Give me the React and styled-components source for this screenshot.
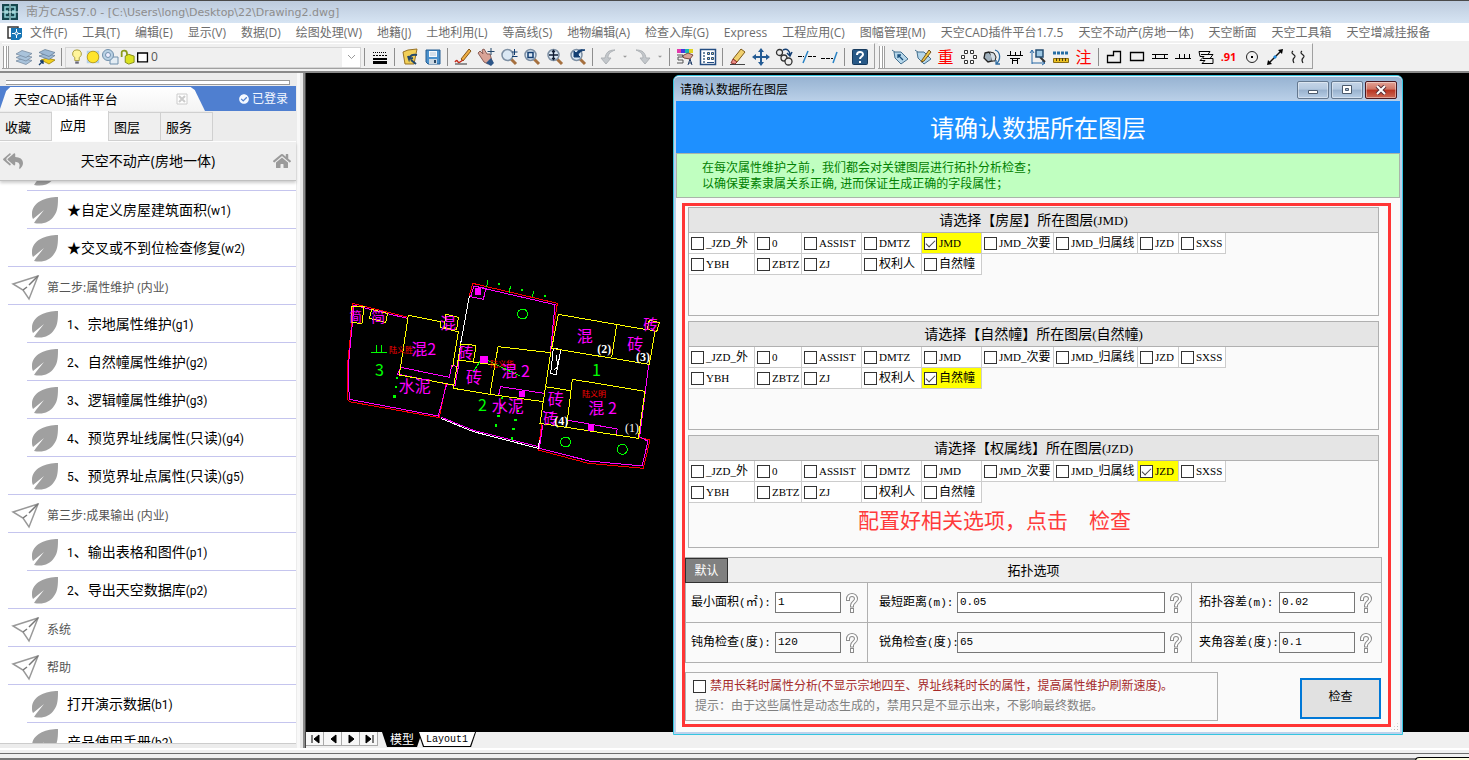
import React, { useState } from "react";
import styled, { createGlobalStyle, css } from "styled-components";
import { FaCheckCircle, FaHome, FaReplyAll } from "react-icons/fa";

const GlobalStyle = createGlobalStyle`
    *, *::before, *::after {
        box-sizing: border-box;
    }

    body {
        margin: 0;
        overflow: hidden;
        background: #f0f0f0;
        font-family: "Open Sans", "Noto Sans CJK SC", sans-serif;
        font-size: 12px;
        line-height: 16px;
        color: #000;
    }

    button, input, select {
        font: inherit;
        color: inherit;
        margin: 0;
    }
`;

// --- Main window ---
const Window = styled.div`
    display: flex;
    flex-direction: column;
    height: 100vh;
    white-space: nowrap;
`;

const TitleBar = styled.header`
    display: flex;
    align-items: center;
    gap: 8px;
    height: 23px;
    flex-shrink: 0;
    padding-left: 2px;
    border-top: 1px solid #4a4a4a;
    background: linear-gradient(#bdcbdd, #d6e4f3);
    color: #8d8d8d;
`;

const TitleLatin = styled.span`
    font-family: "DejaVu Sans", sans-serif;
    font-size: 11px;
`;

const MenuBar = styled.nav`
    display: flex;
    align-items: center;
    gap: 15px;
    height: 18px;
    flex-shrink: 0;
    padding: 2px 0 0 7px;
    background: #fff;
`;

const MenuButton = styled.button`
    padding: 0;
    border: 0;
    background: none;
    color: #6d6d6d;
`;

const MenuIcon = styled.span`
    display: flex;
    margin-right: -8px;
`;

const Toolbars = styled.div`
    display: flex;
    gap: 3px;
    height: 32px;
    flex-shrink: 0;
    padding: 2px 0 2px 2px;
    background: #f0f0f0;
    border-bottom: 2px solid #8a8a8a;
`;

const Toolbar = styled.div`
    display: flex;
    align-items: center;
    padding: 2px 3px 0 1px;
    border-top: 1px solid #fff;
    border-right: 1px solid #a0a0a0;
    border-bottom: 1px solid #a0a0a0;
`;

const Grip = styled.span`
    width: 6px;
    height: 22px;
    margin-right: 3px;
    border: solid #a0a0a0;
    border-width: 0 1px;
    background: linear-gradient(90deg, #fff 2px, #a0a0a0 2px, #a0a0a0 3px, #fff 3px);
`;

const ToolButton = styled.button`
    display: flex;
    align-items: center;
    justify-content: center;
    width: ${({ $narrow }) => ($narrow ? "12px" : "23px")};
    height: 23px;
    padding: 0;
    border: 0;
    background: none;
    color: #f00;
    font-size: ${({ $small }) => ($small ? "11px" : "16px")};
    font-weight: ${({ $small }) => ($small ? 700 : 400)};
`;

const Separator = styled.span`
    width: 1px;
    height: 18px;
    margin: 0 3px;
    background: #8e8e8e;
`;

const LayerBox = styled.div`
    display: flex;
    align-items: center;
    width: 296px;
    height: 21px;
    padding-left: 3px;
    border: 1px solid #d5d5d5;
    background: #f0f0f0;

    select {
        flex: 1;
        height: 19px;
        padding: 0;
        border: 0;
        appearance: none;
        background: none;
        color: #555;
    }
`;

const LayerArrow = styled.span`
    display: flex;
    align-items: center;
    justify-content: center;
    width: 18px;
    height: 19px;
    background: #fff;
`;

const Workspace = styled.div`
    display: flex;
    flex: 1;
    min-height: 0;
`;

// --- Plugin palette on the left ---
const Sidebar = styled.aside`
    display: flex;
    flex-direction: column;
    width: 306px;
    flex-shrink: 0;
    padding: 7px 9px 4px 0;
    background: #ececec;
    border-right: 1px solid #444;
    box-shadow: inset -2px 0 #8a8a8a, inset -5px 0 #e8e8e8, inset -8px 0 #f8f8f8;
`;

const SidebarGrip = styled.div`
    height: 5px;
    margin: 0 6px 1px;
    flex-shrink: 0;
    border: solid #999;
    border-width: 1px 1px 1px 0;
    background: #fff;
`;

const PluginBar = styled.div`
    display: flex;
    justify-content: space-between;
    height: 25px;
    flex-shrink: 0;
    background: #4f7fd0;
`;

const PluginTab = styled.div`
    display: flex;
    align-items: center;
    justify-content: space-between;
    width: 205px;
    padding: 0 17px 0 14px;
    background: linear-gradient(#fff, #f4f4f4);
    clip-path: polygon(0 92%, 3% 20%, 5% 4%, 93% 4%, 95% 16%, 100% 100%, 0 100%);
    font-size: 13px;

    button {
        display: flex;
        padding: 0;
        border: 0;
        background: none;
    }
`;

const LoginState = styled.span`
    display: flex;
    align-items: center;
    gap: 3px;
    padding-right: 8px;
    color: #f4f8ff;
`;

const CategoryTabs = styled.div`
    display: flex;
    height: 31px;
    flex-shrink: 0;
    align-items: flex-end;
    border-bottom: 1px solid #fff;
`;

const CategoryTab = styled.button`
    width: 52px;
    height: 29px;
    padding: 0 0 0 5px;
    border: 1px solid #d0d0d0;
    border-left: 0;
    background: #efefef;
    text-align: left;
    font-size: 13px;

    ${({ $active }) =>
        $active &&
        css`
            width: 57px;
            height: 31px;
            padding: 0 0 2px 8px;
            border-bottom: 0;
            background: #fff;
        `}
`;

const PageHeader = styled.div`
    display: flex;
    align-items: center;
    justify-content: space-between;
    height: 39px;
    flex-shrink: 0;
    padding: 0 5px 0 3px;
    background: #efefef;
    border-bottom: 1px solid #c0c0c0;
    box-shadow: 0 2px 3px rgba(0, 0, 0, 0.2);
    z-index: 1;
    color: #9b9b9b;

    h2 {
        margin: 0;
        color: #000;
        font-size: 14px;
        font-weight: 400;
    }

    button {
        display: flex;
        padding: 0;
        border: 0;
        background: none;
        color: inherit;
    }
`;

const CommandList = styled.div`
    flex: 1;
    min-height: 0;
    overflow: hidden;
    background: #fff;
    border-bottom: 1px solid #ccc;
`;

// A lista começa rolada: só o fim do primeiro item aparece
const CommandScroll = styled.div`
    margin-top: -28px;
`;

const Command = styled.button`
    display: flex;
    align-items: center;
    gap: ${({ $group }) => ($group ? "6px" : "8px")};
    width: calc(100% - 8px);
    height: 38px;
    margin-left: 8px;
    padding: ${({ $group }) => ($group ? "4px 0 0 3px" : "0 0 0 23px")};
    border: 0;
    background: linear-gradient(#c5c5ee, #c5c5ee) ${({ $inset }) => ($inset ? "19px" : "0")} 100% / 100% 1px no-repeat;
    font-size: ${({ $group }) => ($group ? "12px" : "14px")};
    color: ${({ $group }) => ($group ? "#555" : "#000")};
`;

const SansLatin = styled.span`
    font-family: Roboto, sans-serif;
    font-size: 12px;
`;

// --- Drawing area ---
const Editor = styled.main`
    position: relative;
    display: flex;
    flex: 1;
    flex-direction: column;
    min-width: 0;
`;

const Canvas = styled.div`
    flex: 1;
    min-height: 0;
    padding: 197px 0 0 34px;
    background: #000;
    overflow: hidden;
`;

const LayoutStrip = styled.div`
    display: flex;
    height: 16px;
    flex-shrink: 0;
    background: #f0f0f0;
`;

const NavButton = styled.button`
    display: flex;
    align-items: center;
    justify-content: center;
    width: 18px;
    height: 14px;
    padding: 0;
    border: 1px solid #aaa;
    border-width: 0 1px 1px 0;
    background: #f7f7f7;
`;

const LayoutTab = styled.button`
    position: relative;
    z-index: 0;
    height: 15px;
    padding: 0 8px;
    border: 0;
    margin-left: ${({ $active }) => ($active ? "4px" : "-4px")};
    background: #000;
    color: ${({ $active }) => ($active ? "#fff" : "#000")};
    clip-path: polygon(0 0, 100% 0, calc(100% - 5px) 100%, 5px 100%);
    font-family: ${({ $active }) => ($active ? "inherit" : '"Liberation Mono", monospace')};
    font-size: ${({ $active }) => ($active ? "12px" : "10px")};
    line-height: 13px;

    &::before {
        content: "";
        position: absolute;
        inset: 0 1px 1px;
        z-index: -1;
        background: ${({ $active }) => ($active ? "#000" : "#fff")};
        clip-path: polygon(0 0, 100% 0, calc(100% - 5px) 100%, 5px 100%);
    }
`;

const StatusBar = styled.footer`
    display: flex;
    justify-content: flex-end;
    height: 12px;
    flex-shrink: 0;
    border-top: 2px solid #fff;
    background: linear-gradient(#f0f0f0 3px, #6d6d6d 3px, #6d6d6d 4px, #f0f0f0 4px, #f0f0f0 8px, #777 8px);
`;

const Balloon = styled.div`
    width: 54px;
    height: 4px;
    margin-top: 7px;
    border: 1px solid #000;
    border-bottom: 0;
    border-right: 0;
    border-radius: 8px 0 0 0;
    background: #ffffe1;
`;

// --- Layer dialog ---
const Dialog = styled.section`
    position: absolute;
    top: 2px;
    left: 367px;
    right: 66px;
    display: flex;
    flex-direction: column;
    padding: 0 2px 2px;
    border: 1px solid #35c5e0;
    border-radius: 6px 6px 0 0;
    background: #bcd2ec;
`;

const DialogTitle = styled.div`
    display: flex;
    align-items: center;
    gap: 2px;
    height: 25px;
    margin: 0 -2px;
    padding: 1px 5px 0 6px;
    border-top: 1px solid #e6f4fc;
    border-radius: 5px 5px 0 0;
    background: linear-gradient(#97b3d2, #bad0e8);
    font-size: 12px;

    span {
        flex: 1;
    }
`;

const CaptionButton = styled.button`
    display: flex;
    align-items: center;
    justify-content: center;
    width: 32px;
    height: 18px;
    padding: 0;
    border: 1px solid ${({ $close }) => ($close ? "#4a1820" : "#64788f")};
    border-radius: 2px;
    background: ${({ $close }) =>
        $close
            ? "linear-gradient(#e3a396, #cf7463 45%, #b93320 50%, #cc6a56)"
            : "linear-gradient(#c5d5e7, #b4c8df 45%, #98b1cd 50%, #b8cee6)"};
    box-shadow: inset 0 0 0 1px rgba(255, 255, 255, 0.4);
`;

const Banner = styled.h1`
    margin: 0;
    height: 52px;
    padding-top: 2px;
    background: #1e90ff;
    color: #fff;
    font-size: 24px;
    font-weight: 400;
    line-height: 50px;
    text-align: center;
`;

const Notice = styled.p`
    margin: 0;
    padding: 6px 25px 5px;
    border: 1px solid #a9b5a9;
    background: #c0ffc0;
    color: #008000;
`;

const DialogBody = styled.div`
    position: relative;
    padding: 5px 9px 5px 6px;
    background: #fafafa;
`;

const Highlight = styled.div`
    border: 3px solid #ff3535;
    padding: 1px 6px 3px 0;
`;

const LayerPanel = styled.fieldset`
    min-width: 0;
    min-height: ${({ $tall }) => ($tall ? "113px" : "109px")};
    margin: 0 3px 5px;
    padding: 0;
    border: 1px solid #b0b0b0;
`;

const PanelTitle = styled.h3`
    margin: 0;
    height: 25px;
    border-bottom: 1px solid #b0b0b0;
    background: #e5e5e5;
    font-size: 14px;
    font-weight: 400;
    line-height: 24px;
    text-align: center;
`;

const LayerGrid = styled.div`
    display: grid;
    grid-template-columns: 66px 47px 60px 60px 60px 72px 84px 41px 47px;
`;

const LayerCell = styled.label`
    display: flex;
    align-items: center;
    gap: 2px;
    height: 21px;
    padding-left: 2px;
    border: solid #ccc;
    border-width: 0 1px 1px 0;
    background: ${({ $checked }) => ($checked ? "#ff0" : "#fff")};
`;

const CheckBox = styled.input`
    position: relative;
    width: 13px;
    height: 13px;
    flex-shrink: 0;
    appearance: none;
    border: 1px solid #333;
    background: #fff;

    &:checked::after {
        content: "";
        position: absolute;
        top: 2px;
        left: 1px;
        width: 9px;
        height: 5px;
        border: solid #444;
        border-width: 0 0 1px 1px;
        transform: rotate(-45deg);
    }
`;

const SerifLatin = styled.span`
    font-family: "Liberation Serif", serif;
    font-size: ${({ $large }) => ($large ? "13px" : "11px")};
`;

const MonoLatin = styled.span`
    font-family: "Liberation Mono", monospace;
    font-size: 11px;
`;

const RedNote = styled.p`
    margin: 5px 0 0 169px;
    color: #ff3a3a;
    font-size: 21px;
    line-height: 24px;
`;

const Topology = styled.div`
    margin-top: 9px;
    border: 1px solid #b0b0b0;
`;

const TopologyHead = styled.div`
    position: relative;
    height: 25px;
    border-bottom: 1px solid #b0b0b0;
    background: #efefef;
    font-size: 13px;
    line-height: 24px;
    text-align: center;
`;

const DefaultButton = styled.button`
    position: absolute;
    top: 0;
    left: -1px;
    width: 43px;
    height: 25px;
    padding: 0 0 2px;
    border: 1px solid #303030;
    background: #808080;
    color: #fff;
    font-size: 12px;
`;

const TopologyGrid = styled.div`
    display: grid;
    grid-template-columns: 182px 1fr 189px;
`;

const Field = styled.div`
    display: flex;
    align-items: center;
    height: ${({ $last }) => ($last ? "39px" : "40px")};
    padding: 0 4px 0 ${({ $column }) => ["5px", "11px", "7px"][$column]};
    border: solid #b0b0b0;
    border-width: ${({ $last }) => ($last ? "0" : "0 0 1px")};
    border-right-width: ${({ $column }) => ($column === 2 ? "0" : "1px")};

    label {
        width: ${({ $column }) => ["84px", "78px", "80px"][$column]};
    }

    input {
        flex: 1;
        min-width: 0;
        height: 21px;
        padding: 0 2px 2px;
        border: 1px solid #777;
        background: ${({ $last }) => ($last ? "#fafafa" : "#fff")};
        font-family: "Liberation Mono", monospace;
        font-size: 11px;
    }
`;

const HelpButton = styled.button`
    display: flex;
    justify-content: center;
    width: 22px;
    padding: 0;
    border: 0;
    background: none;
`;

const DialogFooter = styled.div`
    display: flex;
    align-items: center;
    justify-content: space-between;
    margin-top: 9px;
`;

const OptionBox = styled.div`
    width: 533px;
    height: 49px;
    padding: 3px 7px;
    border: 1px solid #b0b0b0;
    line-height: 20px;

    label {
        display: flex;
        align-items: center;
        gap: 4px;
        color: #a52a2a;
    }

    p {
        margin: 0 0 0 2px;
        color: #808080;
    }
`;

const CheckButton = styled.button`
    width: 81px;
    height: 41px;
    margin: 4px 1px 0 0;
    padding: 0 0 3px;
    border: 2px solid #0078d7;
    background: #e1e1e1;
`;

const ResizeGrip = styled.span`
    position: absolute;
    right: 1px;
    bottom: 1px;
    width: 9px;
    height: 9px;
    background: radial-gradient(circle, #b8b8b8 1px, transparent 1px) 0 0 / 3px 3px;
    clip-path: polygon(100% 0, 100% 100%, 0 100%);
`;

// --- Data ---
const menus = [
    "文件(F)",
    "工具(T)",
    "编辑(E)",
    "显示(V)",
    "数据(D)",
    "绘图处理(W)",
    "地籍(J)",
    "土地利用(L)",
    "等高线(S)",
    "地物编辑(A)",
    "检查入库(G)",
    "Express",
    "工程应用(C)",
    "图幅管理(M)",
    "天空CAD插件平台1.7.5",
    "天空不动产(房地一体)",
    "天空断面",
    "天空工具箱",
    "天空增减挂报备",
];

const commands = [
    { text: "" },
    { text: "★自定义房屋建筑面积(w1)" },
    { text: "★交叉或不到位检查修复(w2)" },
    { text: "第二步:属性维护 (内业)", group: true },
    { text: "1、宗地属性维护(g1)" },
    { text: "2、自然幢属性维护(g2)" },
    { text: "3、逻辑幢属性维护(g3)" },
    { text: "4、预览界址线属性(只读)(g4)" },
    { text: "5、预览界址点属性(只读)(g5)" },
    { text: "第三步:成果输出 (内业)", group: true },
    { text: "1、输出表格和图件(p1)" },
    { text: "2、导出天空数据库(p2)" },
    { text: "系统", group: true },
    { text: "帮助", group: true },
    { text: "打开演示数据(b1)" },
    { text: "产品使用手册(b2)" },
];

const layers = [
    "_JZD_外",
    "0",
    "ASSIST",
    "DMTZ",
    "JMD",
    "JMD_次要",
    "JMD_归属线",
    "JZD",
    "SXSS",
    "YBH",
    "ZBTZ",
    "ZJ",
    "权利人",
    "自然幢",
];

const panels = [
    { title: "请选择【房屋】所在图层(JMD)", selected: "JMD" },
    { title: "请选择【自然幢】所在图层(自然幢)", selected: "自然幢" },
    { title: "请选择【权属线】所在图层(JZD)", selected: "JZD", note: "配置好相关选项，点击　检查" },
];

const fields = [
    { id: "minArea", label: "最小面积(㎡):", value: "1" },
    { id: "minDistance", label: "最短距离(m):", value: "0.05" },
    { id: "tolerance", label: "拓扑容差(m):", value: "0.02" },
    { id: "obtuse", label: "钝角检查(度):", value: "120" },
    { id: "acute", label: "锐角检查(度):", value: "65" },
    { id: "angleTolerance", label: "夹角容差(度):", value: "0.1" },
];

// --- Icons ---
const Lens = ({ children }) => (
    <>
        <path d="M11 11l5 5" stroke="#a5703f" strokeWidth="3" />
        <circle cx="7.5" cy="7" r="5.5" fill="#dbe8f4" stroke="#7d8fa3" strokeWidth="1.5" />
        {children}
    </>
);

const Tag = () => (
    <>
        <path d="M1 2l4 3" stroke="#44708f" />
        <path d="M3 4l7 0 7 7-7 5-6-6z" fill="#b5d6ea" stroke="#44708f" />
    </>
);

const icons = {
    layers: (
        <g fill="#a9c3db" stroke="#70849a" strokeWidth=".7">
            <path d="M1 13l6-2.500 10 2-6 4z" />
            <path d="M1 9.500l6-2.500 10 2-6 4z" />
            <path d="M1 6l6-3.500 10 3-6 4z" />
        </g>
    ),
    layersPrev: (
        <>
            <path d="M3 12l6-2 8 2-6 4z" fill="#f2cf1c" stroke="#8f7500" strokeWidth=".7" />
            <g fill="#9db9d6" stroke="#607a94" strokeWidth=".7">
                <path d="M1 8l6-2.500 10 2-6 4z" />
                <path d="M1 4.500l6-3 10 3-6 4z" />
            </g>
            <path d="M1 17l4-4m-3 0h3v3" stroke="#123a6b" fill="none" strokeWidth="1.300" />
        </>
    ),
    bulb: (
        <>
            <path d="M9 1a4.500 4.500 0 0 0-2.500 8.500V13h5V9.500A4.500 4.500 0 0 0 9 1z" fill="#fff59b" stroke="#a09535" />
            <path d="M7 14h4v2.500H7z" fill="#667" />
        </>
    ),
    sun: (
        <>
            <path d="M2 2h14v14H2z" fill="#b5d0e3" />
            <circle cx="9" cy="9" r="6.500" fill="#ffe52b" stroke="#b99b13" />
        </>
    ),
    viewport: (
        <>
            <path d="M9 9h8v7H9z" fill="#e4edf4" stroke="#7190ac" />
            <circle cx="7" cy="7" r="5.500" fill="#b9d1e4" stroke="#7190ac" />
            <circle cx="7" cy="7" r="2.500" fill="#eef" stroke="#7190ac" />
        </>
    ),
    lock: (
        <>
            <path d="M3 9V4c0-3 6-3 6 1v3" fill="none" stroke="#8a9a1a" strokeWidth="2" />
            <path d="M7 8l4-2 6 2v7l-6 2-4-2z" fill="#dbe321" stroke="#7b8412" />
        </>
    ),
    swatch: <path d="M3 4.500h11v10H3z" fill="#fff" stroke="#000" strokeWidth="1.500" />,
    lineweight: (
        <g stroke="#000" fill="none" shapeRendering="crispEdges">
            <path d="M2 4.500h14" strokeDasharray="1 1" />
            <path d="M2 7.500h14" strokeDasharray="2 1" />
            <path d="M2 11h14" strokeWidth="2" />
            <path d="M2 14.500h14" strokeWidth="3" />
        </g>
    ),
    open: (
        <>
            <path d="M2 4l5-2 9-1-3 15H4z" fill="#f1cf57" stroke="#997325" />
            <path d="M16 7c-4-1-7 0-8 4l-1-3m1 3l4-1M10 12l5 4" fill="none" stroke="#24486b" strokeWidth="2" />
        </>
    ),
    save: (
        <>
            <path d="M2 2h14v14H4l-2-2z" fill="#4b91cc" stroke="#245c91" />
            <path d="M5 3h8v6H5z" fill="#f5f9fc" />
            <path d="M5 11h8v5H5z" fill="#cbd7e1" />
            <path d="M10 12h2v3h-2z" fill="#284766" />
            <path d="M6 5h6M6 7h6" stroke="#b4c6d8" />
        </>
    ),
    pen: (
        <>
            <path d="M7 11l8-10 2 2-8 10z" fill="#efae41" stroke="#865719" />
            <path d="M1 14c3-4 2 2 5 0l3-2" stroke="#c32c1c" strokeWidth="1.500" fill="none" />
            <path d="M1 16h12" stroke="#333" />
        </>
    ),
    hand: (
        <>
            <path d="M1 5l2-2 3 3-1-4 2-1 3 5 3 0 2 7-4 3-4-2z" fill="#d9a497" stroke="#8b5f58" />
            <path d="M9 15l5-5 3 5-3 3z" fill="#2d5688" />
            <path d="M14 0v7M10.500 3.500h7" stroke="#24486b" />
        </>
    ),
    zoomRealtime: (
        <>
            <Lens />
            <path d="M14.500 1v6M12 4h5.500M12 8.500h5.500" stroke="#133e72" />
        </>
    ),
    zoomWindow: (
        <Lens>
            <path d="M5 4.500h5v5H5z" fill="none" stroke="#133e72" strokeWidth="1.500" />
        </Lens>
    ),
    zoomExtents: (
        <Lens>
            <path d="M7.500 2.500v9M3 7h9M6 4l1.500-1.500L9 4M6 10l1.500 1.500L9 10" fill="none" stroke="#101c33" strokeWidth="1.300" />
        </Lens>
    ),
    zoomPrev: (
        <Lens>
            <path d="M5 9V3l2 2c2-3 5-4 9-3-4 1-6 2-7 5l2 2z" fill="#133e72" stroke="#133e72" />
        </Lens>
    ),
    undo: <path d="M16 2C9 2 7 5 6 10H2l5 6 5-6H9c0-4 2-6 7-8z" fill="#c3c7cb" stroke="#aeb2b6" />,
    redo: <path d="M2 2c7 0 9 3 10 8h4l-5 6-5-6h3C9 6 7 4 2 2z" fill="#c3c7cb" stroke="#aeb2b6" />,
    drop: <path d="M6 7h6l-3 3z" fill="#999" />,
    palette: (
        <>
            <path d="M1 1h4v4H1z" fill="#e339ab" />
            <path d="M5 1h4v4H5z" fill="#433be0" />
            <path d="M9 1h4v4H9z" fill="#19b8b3" />
            <path d="M13 1h4v4h-4z" fill="#e1d424" />
            <path d="M6 8l6-3 5 2-3 4-6-1z" fill="#d9a497" stroke="#7b4940" />
            <path d="M1 7h6v2H2v3h5v3H1" stroke="#555" fill="none" />
            <path d="M12 17l2-6 2 6m-3-2h3" stroke="#1d3a66" fill="none" />
        </>
    ),
    props: (
        <>
            <path d="M1.500 1.500h15v15h-15z" fill="#fff" stroke="#244d82" strokeWidth="1.500" />
            <path d="M4 5h2M4 8h2M4 11h2M4 14h2" stroke="#468" strokeWidth="1.500" />
            <path d="M8.500 4.500h2v2h-2zM12.500 4.500h2v2h-2zM8.500 9.500h2v2h-2zM12.500 9.500h2v2h-2z" fill="#e6d16d" stroke="#244d82" />
            <path d="M8 14.500h7" stroke="#244d82" />
        </>
    ),
    erase: (
        <>
            <path d="M4 11l8-10 4 3-8 10z" fill="#f0d06e" stroke="#7e5b19" />
            <path d="M4 11l4 3-2 2-4-1z" fill="#ea8f86" stroke="#8f332c" />
            <path d="M1 16.500h15" stroke="#444" />
        </>
    ),
    move: <path d="M9 0l3 4h-2v4h4V6l4 3-4 3v-2h-4v4h2l-3 4-3-4h2v-4H4v2L0 9l4-3v2h4V4H6z" fill="#245b94" />,
    copy: (
        <>
            <g fill="#eee" stroke="#333" strokeWidth="1.300">
                <circle cx="4.500" cy="4.500" r="3" />
                <circle cx="9" cy="10" r="3" />
                <circle cx="13.500" cy="13.500" r="3.500" />
            </g>
            <path d="M8 2c4-2 7 1 7 5m-3-2l3 3 2-4" fill="none" stroke="#133e72" strokeWidth="1.500" />
        </>
    ),
    trim: (
        <>
            <path d="M0 8.500h6M10 8.500h8" stroke="#000" strokeDasharray="4 1" />
            <path d="M5 15L10 3" stroke="#2782c5" strokeWidth="1.500" />
        </>
    ),
    extend: (
        <>
            <path d="M0 10.500h12" stroke="#000" strokeDasharray="4 1" />
            <path d="M12 15l4-11" stroke="#2782c5" strokeWidth="1.500" />
        </>
    ),
    help: (
        <>
            <rect x="1.500" y="1.500" width="15" height="15" rx="1" fill="#285987" stroke="#173a5d" />
            <path d="M6 7c0-4 6-4 6-.5 0 2-3 2-3 4.500M9 13v2" fill="none" stroke="#fff" strokeWidth="2" />
        </>
    ),
    tag: (
        <>
            <Tag />
            <path d="M7 7l5 5M7 10V7h3" fill="none" stroke="#174e7b" strokeWidth="1.300" />
        </>
    ),
    tagEdit: (
        <>
            <Tag />
            <path d="M8 12l7-10 2 2-7 9-3 1z" fill="#edc847" stroke="#73521b" />
        </>
    ),
    dots: (
        <path
            d="M4.500 2.500h3v3h-3zM10.500 2.500h3v3h-3zM1.500 7.500h3v3h-3zM13.500 7.500h3v3h-3zM4.500 12.500h3v3h-3zM10.500 12.500h3v3h-3z"
            fill="#fff"
            stroke="#333"
        />
    ),
    rotate: (
        <>
            <path d="M2 5l4-1 3 4v5l-4 1-4-4z" fill="#9fb0bd" stroke="#222" strokeWidth="1.300" />
            <path d="M7 4l4 1 2 4-1 4-3 0" fill="#d3dce3" stroke="#222" />
            <path d="M12 2c6 2 6 10 1 14m0-4v4h4" fill="none" stroke="#2c6aa0" strokeWidth="1.300" />
        </>
    ),
    fence: <path d="M1 7.500h16M4.500 7V3M9.500 7V4M14.500 7V3M6.500 10v6M11.500 10v6M6 12.500h5M4 10.500h10" fill="none" stroke="#000" />,
    pick: (
        <>
            <path d="M3 16V3m-2 2l2-3 2 3M3 15h13m-3-2l3 2-3 2" stroke="#2768a5" fill="none" />
            <path d="M11 9l5 5" stroke="#333" strokeWidth="2" />
            <path d="M7 2h7v7H7z" fill="#9cc6e2" stroke="#244d72" strokeWidth="1.500" />
        </>
    ),
    ruler: (
        <>
            <path d="M1 5h16" stroke="#246ca4" strokeWidth="3" strokeDasharray="3 1" />
            <path d="M1.500 10.500h15v4h-15z" fill="#e9bf22" stroke="#876b13" />
            <path d="M4.500 10v3m3-3v3m3-3v3m3-3v3" stroke="#4a3b10" />
        </>
    ),
    polygon: <path d="M2.500 7.500h6v-4h7v11h-13z" fill="none" stroke="#000" strokeWidth="1.300" />,
    rect: <path d="M2.500 4.500h13v8h-13z" fill="none" stroke="#000" strokeWidth="1.300" />,
    bridge: <path d="M1 6.500h16M1 10.500h16M4.500 6v4M13.500 6v4" fill="none" stroke="#000" />,
    comb: <path d="M1 10.500h16M5.500 11V6M10.500 11V6M15.500 11V6" fill="none" stroke="#000" />,
    steps: <path d="M2 3.500h11l-2 3h5l-3 4h3v5H5l3-3H3l4-4H3zM4 6.500h7M6 10.500h8" fill="none" stroke="#000" />,
    point: (
        <>
            <circle cx="9" cy="9" r="5.500" fill="none" stroke="#222" />
            <path d="M8 8h2v2H8z" />
        </>
    ),
    measure: (
        <>
            <path d="M3 15L15 3" stroke="#111" strokeWidth="1.500" />
            <path d="M1 17l1-5 4 4zM17 1l-5 1 4 4z" />
            <path d="M7 9l2-2 2 2-2 2z" fill="#2089dc" />
        </>
    ),
    waves: <path d="M4 3c-4 3 5 4 1 7-2 2-1 3 0 5M13 3c-4 3 5 4 1 7-2 2-1 3 0 5" fill="none" stroke="#222" strokeWidth="1.200" />,
};

const ToolIcon = ({ name, size = 18 }) => (
    <svg width={size} height={size} viewBox="0 0 18 18">
        {icons[name]}
    </svg>
);

const LeafIcon = () => (
    <svg width="28" height="28" viewBox="0 0 28 28" fill="#a0a0a0">
        <path d="M27 1C15 1 1 6 1 18c0 2 0 3 1 5l11-9L5 24l-2 3c9 2 16-1 20-7 4-5 4-12 4-19z" />
    </svg>
);

const PlaneIcon = () => (
    <svg width="30" height="26" viewBox="0 0 30 26" fill="none" stroke="#999" strokeWidth="1.500">
        <path d="M27 1L2 9l10 6 6 9z" />
        <path d="M27 1L18 10m-2 2l-4 3" stroke="#777" />
    </svg>
);

const HelpIcon = () => (
    <svg width="18" height="22" viewBox="0 0 18 22" fill="none" strokeLinecap="square">
        <path d="M5 7c0-5.500 8-5.500 8 0 0 3-4 3-4 6.500M9 18v1" stroke="#8c8c8c" strokeWidth="4" />
        <path d="M5 7c0-5.500 8-5.500 8 0 0 3-4 3-4 6.500M9 18v1" stroke="#fff" strokeWidth="2" />
    </svg>
);

// --- Components ---
const tools = (names) =>
    names.map((name, i) => {
        if (name === "|") return <Separator key={i} />;
        return (
            <ToolButton key={i} aria-label={name} $narrow={name === "drop"} $small={name === ".91"}>
                {icons[name] ? <ToolIcon name={name} /> : name}
            </ToolButton>
        );
    });

// Separa os trechos latinos, que usam outra fonte e tamanho
const Mixed = ({ text, as: Latin, ...rest }) =>
    text.split(/([\x20-\x7e]+)/).map((part, i) =>
        i % 2 ? (
            <Latin key={i} {...rest}>
                {part}
            </Latin>
        ) : (
            part
        )
    );

const poly = (color, ...lines) => (
    <g stroke={color}>
        {lines.map((points) => (
            <polyline key={points} points={points} />
        ))}
    </g>
);

const CadDrawing = () => (
    <svg
        width="330"
        height="210"
        viewBox="0 0 990 630"
        fill="none"
        strokeWidth="3"
        shapeRendering="crispEdges"
        fontFamily='"Noto Sans CJK SC", sans-serif'
    >
        {poly(
            "#f00",
            "205,142 38,100 36,150 22,290 22,388 28,395 298,443 318,342",
            "388,78 398,40 652,100 630,250",
            "605,462 595,540 745,580 910,595 930,510 895,502"
        )}
        {poly(
            "#f0f",
            "205,146 42,106 24,300 28,388 295,438 320,342 345,347",
            "400,48 645,104 632,240",
            "392,80 430,88 438,55 402,48 392,80",
            "182,292 328,322 335,286 355,290 345,347 172,312 182,292",
            "362,220 355,290",
            "476,375 482,350 612,370",
            "302,441 400,481 595,530",
            "608,425 645,430",
            "680,450 832,477 828,495",
            "926,283 899,500 924,514 906,588 748,573 598,535 608,465"
        )}
        {poly("#fff", "388,78 362,220", "302,445 400,485 595,535 598,510", "640,235 663,238 648,315 632,310 640,235", "648,255 654,290 642,300")}
        {poly(
            "#ff0",
            "36,108 72,110 66,160 34,158 36,108",
            "95,118 143,130 137,157 88,145 95,118",
            "178,315 205,136 302,155 300,173 355,185 338,290",
            "318,133 355,142 350,180 312,173 318,133",
            "178,315 340,345",
            "355,270 362,222 408,226 400,278",
            "362,222 340,355 450,373 474,230 632,248 610,395 450,373",
            "355,270 465,285",
            "925,180 655,133 635,235 928,283 945,185",
            "928,150 958,158 950,185 922,178 928,150",
            "830,165 815,262",
            "632,248 600,460 895,505 915,364 697,328 680,470",
            "615,350 692,362"
        )}
        {poly("#0f0", "93,247 140,247", "108,247 108,225", "124,247 124,225", "400,305 420,275 440,270 540,318", "440,52 443,30", "507,68 512,48", "577,82 581,62")}
        <g stroke="#0f0">
            <circle cx="548" cy="132" r="15" />
            <circle cx="677" cy="516" r="15" />
            <circle cx="847" cy="538" r="15" />
        </g>
        <path
            fill="#0f0"
            d="M473 40h6v6h-6zM543 58h6v6h-6zM612 75h6v6h-6zM168 320h7v7h-7zM165 348h7v7h-7zM160 376h7v7h-7zM483 380h7v7h-7zM479 410h7v7h-7zM472 435h7v7h-7zM465 463h7v7h-7zM530 420h7v7h-7zM523 446h7v7h-7zM517 474h7v7h-7zM512 502h7v7h-7z"
        />
        <path fill="#f0f" d="M406 54h18v20h-18zM421 258h22v20h-22zM537 362h18v20h-18zM745 463h16v20h-16z" />
        <g fill="#f0f" fontSize="48">
            <text x="28" y="152" fontSize="38">简</text>
            <text x="94" y="156" fontSize="42">简</text>
            <text x="300" y="178">混</text>
            <text x="214" y="254">混2</text>
            <text x="176" y="367">水泥</text>
            <text x="356" y="265" fontSize="44">砖</text>
            <text x="378" y="338">砖</text>
            <text x="484" y="320">混 2</text>
            <text x="455" y="425">水泥</text>
            <text x="710" y="215">混</text>
            <text x="862" y="240">砖</text>
            <text x="910" y="180" fontSize="44">砖</text>
            <text x="623" y="405">砖</text>
            <text x="610" y="462" fontSize="44">砖</text>
            <text x="745" y="431">混 2</text>
        </g>
        <g fill="#0f0" fontSize="48">
            <text x="105" y="318">3</text>
            <text x="414" y="423">2</text>
            <text x="756" y="318">1</text>
        </g>
        <g fill="#f00" fontSize="24">
            <text x="147" y="248">陆义胜</text>
            <text x="450" y="292">陆义华</text>
            <text x="726" y="380">陆义明</text>
        </g>
        <g fill="#fff" fontSize="36" fontFamily='"Liberation Serif", serif'>
            <text x="772" y="250" fontWeight="700">(2)</text>
            <text x="888" y="273" fontWeight="700">(3)</text>
            <text x="643" y="464" fontWeight="700">(4)</text>
            <text x="855" y="486">(1)</text>
        </g>
    </svg>
);

const LayerSelect = ({ panel }) => {
    const [selected, setSelected] = useState([panel.selected]);

    const toggle = (layer) =>
        setSelected((prev) =>
            prev.includes(layer) ? prev.filter((l) => l !== layer) : [...prev, layer]
        );

    return (
        <LayerPanel $tall={Boolean(panel.note)}>
            <PanelTitle>
                <Mixed text={panel.title} as={SerifLatin} $large />
            </PanelTitle>
            <LayerGrid>
                {layers.map((layer) => (
                    <LayerCell key={layer} $checked={selected.includes(layer)}>
                        <CheckBox
                            type="checkbox"
                            checked={selected.includes(layer)}
                            onChange={() => toggle(layer)}
                        />
                        <span>
                            <Mixed text={layer} as={SerifLatin} />
                        </span>
                    </LayerCell>
                ))}
            </LayerGrid>
            {panel.note && <RedNote>{panel.note}</RedNote>}
        </LayerPanel>
    );
};

const LayerDialog = () => (
    <Dialog>
        <DialogTitle>
            <span>请确认数据所在图层</span>
            <CaptionButton aria-label="最小化">
                <svg width="12" height="10">
                    <path d="M1.500 5.500h9v3h-9z" fill="#fff" stroke="#4b5a6c" />
                </svg>
            </CaptionButton>
            <CaptionButton aria-label="最大化">
                <svg width="12" height="10">
                    <path d="M1.500.5h9v8h-9zM4.500 3.500h3v2h-3z" fill="#fff" fillRule="evenodd" stroke="#4b5a6c" />
                </svg>
            </CaptionButton>
            <CaptionButton aria-label="关闭" $close>
                <svg width="12" height="10">
                    <path d="M2 1l8 8M10 1L2 9" stroke="#5a3038" strokeWidth="4" />
                    <path d="M2 1l8 8M10 1L2 9" stroke="#fff" strokeWidth="2" />
                </svg>
            </CaptionButton>
        </DialogTitle>
        <Banner>请确认数据所在图层</Banner>
        <Notice>
            在每次属性维护之前，我们都会对关键图层进行拓扑分析检查；
            <br />
            以确保要素隶属关系正确, 进而保证生成正确的字段属性；
        </Notice>
        <DialogBody>
            <Highlight>
                {panels.map((panel) => (
                    <LayerSelect key={panel.title} panel={panel} />
                ))}

                <Topology>
                    <TopologyHead>
                        <DefaultButton>默认</DefaultButton>
                        拓扑选项
                    </TopologyHead>
                    <TopologyGrid>
                        {fields.map((field, i) => (
                            <Field key={field.id} $column={i % 3} $last={i > 2}>
                                <label htmlFor={field.id}>
                                    <Mixed text={field.label} as={MonoLatin} />
                                </label>
                                <input id={field.id} defaultValue={field.value} />
                                <HelpButton aria-label="帮助">
                                    <HelpIcon />
                                </HelpButton>
                            </Field>
                        ))}
                    </TopologyGrid>
                </Topology>

                <DialogFooter>
                    <OptionBox>
                        <label>
                            <CheckBox type="checkbox" />
                            禁用长耗时属性分析(不显示宗地四至、界址线耗时长的属性，提高属性维护刷新速度)。
                        </label>
                        <p>提示：由于这些属性是动态生成的，禁用只是不显示出来，不影响最终数据。</p>
                    </OptionBox>
                    <CheckButton>检查</CheckButton>
                </DialogFooter>
            </Highlight>
            <ResizeGrip />
        </DialogBody>
    </Dialog>
);

const PluginSidebar = () => (
    <Sidebar>
        <SidebarGrip />
        <PluginBar>
            <PluginTab>
                天空CAD插件平台
                <button aria-label="关闭">
                    <svg width="12" height="12">
                        <path d="M1 1h10v10H1z" fill="#fff" stroke="#ccc" />
                        <path d="M3 3l6 6M9 3L3 9" stroke="#ccc" strokeWidth="2" />
                    </svg>
                </button>
            </PluginTab>
            <LoginState>
                <FaCheckCircle size={10} />
                已登录
            </LoginState>
        </PluginBar>
        <CategoryTabs>
            <CategoryTab>收藏</CategoryTab>
            <CategoryTab $active>应用</CategoryTab>
            <CategoryTab>图层</CategoryTab>
            <CategoryTab>服务</CategoryTab>
        </CategoryTabs>
        <PageHeader>
            <button aria-label="返回">
                <FaReplyAll size={20} />
            </button>
            <h2>天空不动产(房地一体)</h2>
            <button aria-label="主页">
                <FaHome size={18} />
            </button>
        </PageHeader>
        <CommandList>
            <CommandScroll>
                {commands.map(({ text, group }, i) => (
                    <Command key={i} $group={group} $inset={!group && !commands[i + 1]?.group}>
                        {group ? <PlaneIcon /> : <LeafIcon />}
                        <span>{group ? text : <Mixed text={text} as={SansLatin} />}</span>
                    </Command>
                ))}
            </CommandScroll>
        </CommandList>
    </Sidebar>
);

const navShapes = ["M3 1v8M10 1L5 5l5 4z", "M9 1L4 5l5 4z", "M4 1l5 4-5 4z", "M3 1l5 4-5 4zM10 1v8"];

const App = () => (
    <>
        <GlobalStyle />
        <Window>
            <TitleBar>
                <svg width="16" height="16" viewBox="0 0 16 16">
                    <path d="M0 0h16v16H0z" fill="#16454d" />
                    <path d="M7 3H3v4h3M9 3h4v4h-3M7 13H3V9h3M9 13h4V9h-3" fill="none" stroke="#8fd0d5" strokeWidth="1.500" />
                    <path d="M8 0v16M0 8h16" stroke="#dff" />
                </svg>
                <span>
                    <Mixed text="南方CASS7.0 - [C:\Users\long\Desktop\22\Drawing2.dwg]" as={TitleLatin} />
                </span>
            </TitleBar>
            <MenuBar>
                <MenuIcon>
                    <svg width="16" height="14" viewBox="0 0 16 14">
                        <path d="M1 1h10v11H1z" fill="#fff" stroke="#333" strokeWidth="1.500" />
                        <path d="M4 2h11v9l-3 3H4z" fill="#1876b5" />
                        <path d="M9.500 3v9M5 7.500h9" stroke="#fff" />
                        <circle cx="9.500" cy="7.500" r="1.500" fill="#1876b5" stroke="#fff" />
                    </svg>
                </MenuIcon>
                {menus.map((menu) => (
                    <MenuButton key={menu}>{menu}</MenuButton>
                ))}
            </MenuBar>
            <Toolbars>
                <Toolbar>
                    <Grip />
                    {tools(["layers", "layersPrev", "|"])}
                    <LayerBox>
                        <ToolIcon name="bulb" size={16} />
                        <ToolIcon name="sun" size={16} />
                        <ToolIcon name="viewport" size={18} />
                        <ToolIcon name="lock" size={16} />
                        <ToolIcon name="swatch" size={16} />
                        <select aria-label="图层">
                            <option>0</option>
                        </select>
                        <LayerArrow>
                            <svg width="9" height="6">
                                <path d="M1 1l3.500 3.500L8 1" fill="none" stroke="#999" />
                            </svg>
                        </LayerArrow>
                    </LayerBox>
                    {tools([
                        "|", "lineweight", "|", "open", "save", "|", "pen", "hand",
                        "zoomRealtime", "zoomWindow", "zoomExtents", "zoomPrev", "|",
                        "undo", "drop", "redo", "drop", "|", "palette", "props", "|",
                        "erase", "move", "copy", "trim", "extend", "|", "help",
                    ])}
                </Toolbar>
                <Toolbar>
                    <Grip />
                    {tools([
                        "tag", "tagEdit", "重", "dots", "rotate", "fence", "pick", "ruler", "注", "|",
                        "polygon", "rect", "bridge", "comb", "steps", ".91", "point", "measure", "waves",
                    ])}
                </Toolbar>
            </Toolbars>
            <Workspace>
                <PluginSidebar />
                <Editor>
                    <Canvas>
                        <CadDrawing />
                    </Canvas>
                    <LayoutStrip>
                        {navShapes.map((shape) => (
                            <NavButton key={shape} aria-label="布局">
                                <svg width="12" height="10">
                                    <path d={shape} stroke="#000" />
                                </svg>
                            </NavButton>
                        ))}
                        <LayoutTab $active>模型</LayoutTab>
                        <LayoutTab>Layout1</LayoutTab>
                    </LayoutStrip>
                    <LayerDialog />
                </Editor>
            </Workspace>
            <StatusBar>
                <Balloon />
            </StatusBar>
        </Window>
    </>
);

export default App;
